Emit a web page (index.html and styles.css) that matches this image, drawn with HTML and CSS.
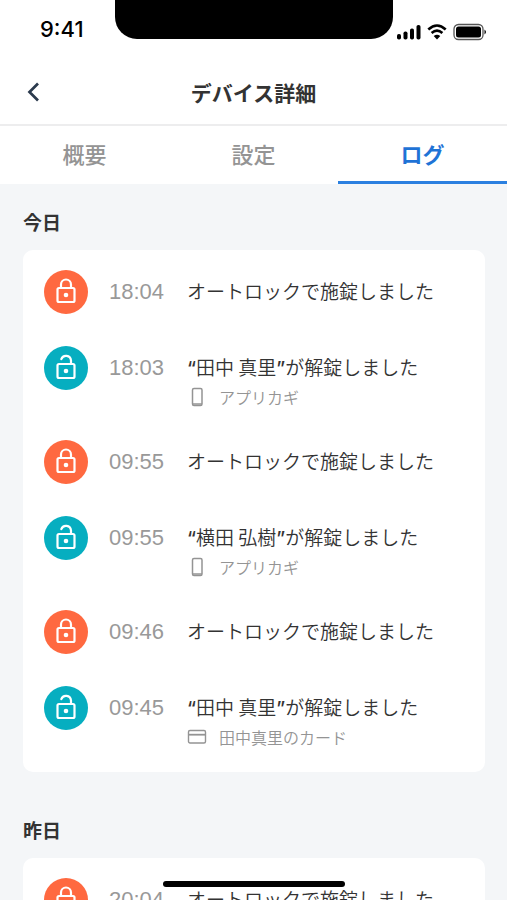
FILE: index.html
```html
<!DOCTYPE html>
<html lang="ja">
<head>
<meta charset="utf-8">
<meta name="viewport" content="width=device-width, initial-scale=1">
<title>デバイス詳細</title>
<link rel="stylesheet" href="styles.css">
</head>
<body>
<svg class="sprite" aria-hidden="true">
  <symbol id="lock" viewBox="0 0 44 44">
    <g fill="none" stroke="currentColor" stroke-width="2.200">
      <rect x="13.500" y="18" width="17" height="14" rx="1.500"/>
      <path d="M17 18v-3.500a5 5 0 0 1 10 0V18"/>
    </g>
    <circle cx="22" cy="25" r="2.300" fill="currentColor"/>
  </symbol>
  <symbol id="unlock" viewBox="0 0 44 44">
    <g fill="none" stroke="currentColor" stroke-width="2.200" stroke-linecap="round">
      <rect x="13.500" y="18" width="17" height="14" rx="1.500"/>
      <path d="M17.300 13.200a5 5 0 0 1 9.700 1.300V18"/>
    </g>
    <circle cx="22" cy="25" r="2.300" fill="currentColor"/>
  </symbol>
  <symbol id="phone" viewBox="0 0 20 20">
    <rect x="5.500" y="1.500" width="9.500" height="17" rx="1.500" fill="none" stroke="currentColor" stroke-width="1.500"/>
    <path d="M5.500 16h9.500v1.500a1 1 0 0 1-1 1h-7.500a1 1 0 0 1-1-1z" fill="currentColor" opacity=".75"/>
  </symbol>
  <symbol id="card" viewBox="0 0 20 20">
    <rect x="1.500" y="3.500" width="17" height="12.500" rx="1.500" fill="none" stroke="currentColor" stroke-width="1.400"/>
    <path d="M1.500 7.700h17" stroke="currentColor" stroke-width="1.800"/>
  </symbol>
</svg>

<header class="top">
  <div class="status">
    <span class="clock">9:41</span>
    <span class="notch"></span>
    <span class="indicators">
      <svg width="24" height="16" viewBox="0 0 24 16" aria-hidden="true">
        <rect x="0" y="10" width="4" height="5.500" rx="1.800"/>
        <rect x="6.500" y="7.500" width="4" height="8" rx="1.800"/>
        <rect x="13" y="4.500" width="4" height="11" rx="1.800"/>
        <rect x="19.500" y="1" width="4" height="14.500" rx="1.800"/>
      </svg>
      <svg width="20" height="16" viewBox="0 0 20 16" aria-hidden="true">
        <path d="M1.300 5.500Q10-2.500 18.700 5.500M4.600 9Q10 4.300 15.400 9" fill="none" stroke="#000" stroke-width="2.600"/>
        <path d="M6.700 12Q10 9.300 13.300 12L10 15.500z"/>
      </svg>
      <svg width="34" height="18" viewBox="0 0 34 18" aria-hidden="true">
        <rect x="1" y="1.500" width="29" height="15" rx="4.500" fill="none" stroke="#555" stroke-width="1.300"/>
        <rect x="3" y="3.500" width="25" height="11" rx="2.500"/>
        <path d="M31.500 6.500q3 2.500 0 5z"/>
      </svg>
    </span>
  </div>
  <div class="titlebar">
    <button class="back" type="button" aria-label="戻る">
      <svg width="14" height="20" viewBox="0 0 14 20" aria-hidden="true"><path d="M12 1.500L3.500 10l8.500 8.500" fill="none" stroke="currentColor" stroke-width="2.700"/></svg>
    </button>
    <h1>デバイス詳細</h1>
  </div>
</header>

<nav class="tabs">
  <a href="#overview">概要</a>
  <a href="#settings">設定</a>
  <a href="#log" class="active" aria-current="page">ログ</a>
</nav>

<main id="log">
  <section>
    <h2>今日</h2>
    <ul class="log">
      <li>
        <svg class="badge locked" aria-hidden="true"><use href="#lock"/></svg>
        <time>18:04</time>
        <div class="entry"><p>オートロックで施錠しました</p></div>
      </li>
      <li>
        <svg class="badge unlocked" aria-hidden="true"><use href="#unlock"/></svg>
        <time>18:03</time>
        <div class="entry"><p><span class="quote">“</span>田中 真里<span class="quote">”</span>が解錠しました</p>
          <small><svg aria-hidden="true"><use href="#phone"/></svg>アプリカギ</small></div>
      </li>
      <li>
        <svg class="badge locked" aria-hidden="true"><use href="#lock"/></svg>
        <time>09:55</time>
        <div class="entry"><p>オートロックで施錠しました</p></div>
      </li>
      <li>
        <svg class="badge unlocked" aria-hidden="true"><use href="#unlock"/></svg>
        <time>09:55</time>
        <div class="entry"><p><span class="quote">“</span>横田 弘樹<span class="quote">”</span>が解錠しました</p>
          <small><svg aria-hidden="true"><use href="#phone"/></svg>アプリカギ</small></div>
      </li>
      <li>
        <svg class="badge locked" aria-hidden="true"><use href="#lock"/></svg>
        <time>09:46</time>
        <div class="entry"><p>オートロックで施錠しました</p></div>
      </li>
      <li>
        <svg class="badge unlocked" aria-hidden="true"><use href="#unlock"/></svg>
        <time>09:45</time>
        <div class="entry"><p><span class="quote">“</span>田中 真里<span class="quote">”</span>が解錠しました</p>
          <small><svg aria-hidden="true"><use href="#card"/></svg>田中真里のカード</small></div>
      </li>
    </ul>
  </section>
  <section>
    <h2>昨日</h2>
    <ul class="log">
      <li>
        <svg class="badge locked" aria-hidden="true"><use href="#lock"/></svg>
        <time>20:04</time>
        <div class="entry"><p>オートロックで施錠しました</p></div>
      </li>
    </ul>
  </section>
</main>
<div class="home-indicator"></div>
</body>
</html>
```
FILE: styles.css
```css
* { box-sizing: border-box; }

body {
  margin: 0;
  height: 100vh;
  overflow: hidden;
  display: flex;
  flex-direction: column;
  background: #f4f6f8;
  color: #333;
  font-family: "Noto Sans CJK JP", sans-serif;
}

h1, h2, p, ul { margin: 0; padding: 0; }

.sprite { position: absolute; width: 0; height: 0; }

.top {
  flex: none;
  background: #fff;
  border-bottom: 2px solid #ededee;
}

.status {
  display: grid;
  grid-template-columns: 1fr 278px 1fr;
  height: 60px;
}

.clock {
  padding: 15px 0 0 40px;
  color: #000;
  font: 500 22px/28px Inter, sans-serif;
}

.notch {
  height: 39px;
  background: #000;
  border-radius: 0 0 22px 22px;
}

.indicators {
  display: flex;
  align-items: center;
  justify-content: flex-end;
  gap: 6px;
  height: 39px;
  padding: 24px 20px 0 0;
}

.indicators svg { flex: none; }

.titlebar {
  display: grid;
  grid-template-columns: 48px 1fr 48px;
  align-items: center;
  height: 64px;
}

.back {
  display: flex;
  padding: 0 0 0 26px;
  border: 0;
  background: none;
  color: #2b3a4d;
}

h1 {
  font-size: 21px;
  font-weight: 700;
  line-height: 32px;
  text-align: center;
}

.tabs {
  flex: none;
  display: grid;
  grid-template-columns: repeat(3, 1fr);
  background: #fff;
}

.tabs a {
  padding: 11px 0 12px;
  border-bottom: 3px solid transparent;
  color: #949494;
  font-size: 22px;
  font-weight: 500;
  line-height: 32px;
  text-align: center;
  text-decoration: none;
}

.tabs .active {
  border-color: #2b80e0;
  color: #1f73d6;
  font-weight: 700;
}

main { padding: 24px 22px 0 23px; }

section { margin-bottom: 44px; }

h2 {
  margin-bottom: 14px;
  font-size: 19px;
  font-weight: 700;
  line-height: 28px;
}

.log {
  display: flex;
  flex-direction: column;
  gap: 32px;
  padding: 20px 21px 24px;
  background: #fff;
  border-radius: 10px;
  list-style: none;
}

.log li {
  display: grid;
  grid-template-columns: 44px 57px 1fr;
  column-gap: 21px;
}

.badge {
  width: 44px;
  height: 44px;
  border-radius: 50%;
  color: #fff;
}

.locked { background: #ff6940; }
.unlocked { background: #06aec0; }

time {
  color: #999;
  font: 22px/44px "Liberation Sans", sans-serif;
}

.entry p {
  padding-top: 3px;
  font-size: 19px;
  font-weight: 350;
  line-height: 36px;
  white-space: nowrap;
}

.quote {
  font-family: Inter, sans-serif;
  font-weight: 500;
  line-height: 1;
}

small {
  display: flex;
  align-items: center;
  gap: 12px;
  height: 23px;
  color: #949494;
  font-size: 16px;
  font-weight: 350;
  line-height: 22px;
}

small svg { width: 20px; height: 20px; }

.home-indicator {
  position: fixed;
  bottom: 13px;
  left: 50%;
  width: 182px;
  height: 6px;
  margin-left: -91px;
  border-radius: 3px;
  background: #000;
}
```
